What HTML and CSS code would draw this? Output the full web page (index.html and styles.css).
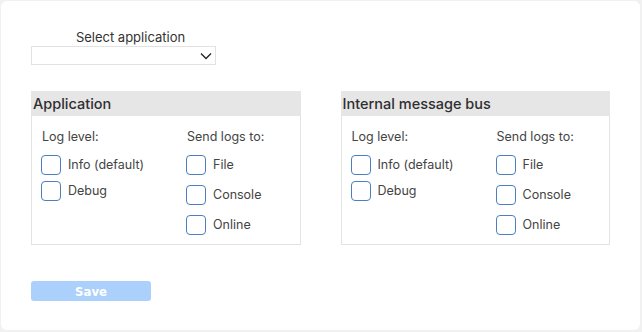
FILE: index.html
```html
<!DOCTYPE html>
<html lang="en">
<head>
    <meta charset="UTF-8">
    <meta name="viewport" content="width=device-width, initial-scale=1.0">
    <title>Logging settings</title>
    <link rel="stylesheet" href="styles.css">
</head>

<body>
    <div class="card">
        <!-- Application picker -->
        <div class="app-select">
            <label for="app">Select application</label>
            <div class="select-box">
                <select id="app"></select>
                <svg class="chevron" width="12" height="8" viewBox="0 0 12 8">
                    <path d="M1 1.5 L6 6.5 L11 1.5" fill="none" stroke="#222" stroke-width="1.3"/>
                </svg>
            </div>
        </div>

        <!-- Panels -->
        <div class="panels">
            <div class="panel">
                <div class="panel-title">Application</div>
                <div class="panel-body">
                    <div class="col col-level">
                        <div class="col-title">Log level:</div>
                        <label class="check"><span class="box"></span>Info (default)</label>
                        <label class="check"><span class="box"></span>Debug</label>
                    </div>
                    <div class="col col-send">
                        <div class="col-title">Send logs to:</div>
                        <label class="check"><span class="box"></span>File</label>
                        <label class="check"><span class="box"></span>Console</label>
                        <label class="check"><span class="box"></span>Online</label>
                    </div>
                </div>
            </div>
            <div class="panel">
                <div class="panel-title">Internal message bus</div>
                <div class="panel-body">
                    <div class="col col-level">
                        <div class="col-title">Log level:</div>
                        <label class="check"><span class="box"></span>Info (default)</label>
                        <label class="check"><span class="box"></span>Debug</label>
                    </div>
                    <div class="col col-send">
                        <div class="col-title">Send logs to:</div>
                        <label class="check"><span class="box"></span>File</label>
                        <label class="check"><span class="box"></span>Console</label>
                        <label class="check"><span class="box"></span>Online</label>
                    </div>
                </div>
            </div>
        </div>

        <button class="save" disabled>Save</button>
    </div>
</body>
</html>
```

FILE: styles.css
```css
body, html {
    margin: 0;
    padding: 0;
    background-color: #f1f1f1;
    font-family: Inter, "Noto Sans", sans-serif;
    color: #333;
}

.card {
    margin: 1px 2px 2px 1px;
    height: 329px;
    box-sizing: border-box;
    background-color: #ffffff;
    border-radius: 6px;
    padding: 28px 30px 0 30px;
}

.app-select {
    width: 185px;
    display: flex;
    flex-direction: column;
}

.app-select label {
    text-align: center;
    font-size: 13px;
    line-height: 16px;
    color: #333;
    margin-bottom: 1px;
    padding-left: 14px;
}

.select-box {
    position: relative;
    height: 19px;
    border: 1px solid #e2e2e2;
    box-sizing: border-box;
}

.select-box select {
    appearance: none;
    border: none;
    background: transparent;
    width: 100%;
    height: 100%;
}

.chevron {
    position: absolute;
    right: 3px;
    top: 5px;
}

.panels {
    display: flex;
    gap: 40px;
    margin-top: 26px;
}

.panel {
    width: 270px;
}

.panel-title {
    background-color: #e6e6e6;
    height: 25px;
    line-height: 25px;
    padding-left: 2px;
    font-size: 14.5px;
    font-weight: 500;
    color: #2f2f2f;
}

.panel-body {
    display: flex;
    border: 1px solid #e3e3e3;
    border-top: none;
    height: 129px;
    box-sizing: border-box;
    padding: 11px 0 0 9px;
}

.col {
    display: flex;
    flex-direction: column;
}

.col-level {
    width: 145px;
    gap: 6px;
}

.col-send {
    gap: 10px;
}

.col-title {
    font-size: 12.5px;
    line-height: 20px;
    color: #444;
    margin-left: 1px;
    margin-bottom: 2px;
}

.col-send .col-title {
    margin-bottom: -2px;
}

.check {
    display: flex;
    align-items: center;
    gap: 7px;
    font-size: 12.5px;
    line-height: 20px;
    color: #444;
}

.box {
    width: 20px;
    height: 20px;
    box-sizing: border-box;
    border: 1px solid #4a7fc1;
    border-radius: 4px;
}

.save {
    display: block;
    margin-top: 36px;
    width: 120px;
    height: 20px;
    border: none;
    border-radius: 3px;
    background-color: #acd0fc;
    color: #ffffff;
    font-family: "Liberation Sans Narrow", "DejaVu Sans Condensed", sans-serif;
    font-weight: bold;
    font-size: 13px;
    padding: 0;
}
```
